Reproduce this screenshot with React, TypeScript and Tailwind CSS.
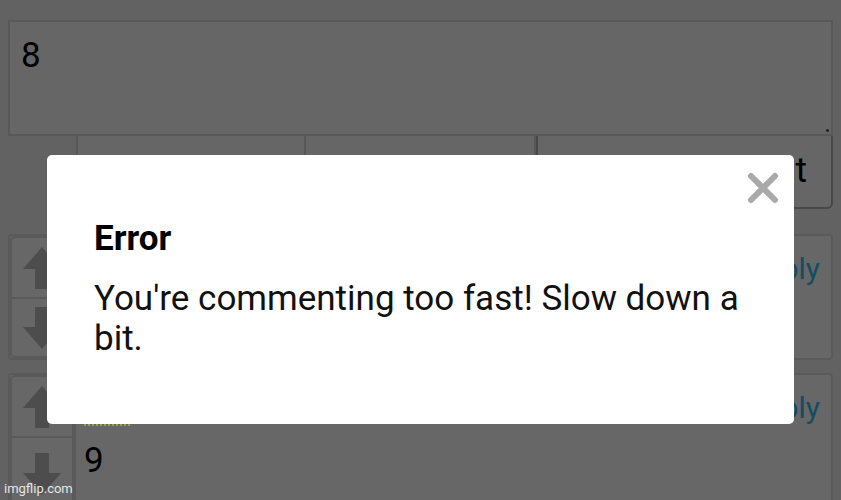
import React from "react";

function Arrow({ dir }: { dir: "up" | "down" }) {
  return (
    <svg width="40" height="42" viewBox="0 0 40 42" className={dir === "down" ? "rotate-180" : ""} aria-hidden>
      <path d="M20 0 L39 22 L27 22 L27 42 L13 42 L13 22 L1 22 Z" fill="#4d4d4d" />
    </svg>
  );
}

function VoteColumn() {
  return (
    <div className="flex w-[64px] shrink-0 flex-col">
      <div className="flex h-[63px] items-center justify-center rounded-t-[5px] border-2 border-[#5a5a5a]">
        <Arrow dir="up" />
      </div>
      <div className="flex flex-1 items-center justify-center rounded-b-[5px] border-2 border-t-0 border-[#5a5a5a]">
        <Arrow dir="down" />
      </div>
    </div>
  );
}

function Comment({ children, height }: { children?: React.ReactNode; height: string }) {
  return (
    <div className={`flex ${height} rounded-[4px] border-2 border-[#5a5a5a] bg-[#676767]`}>
      <VoteColumn />
      <div className="relative flex-1 border-l-2 border-[#5a5a5a]">
        <span className="absolute right-[11px] top-[18px] text-[30px] leading-[30px] text-[#154c62]">Reply</span>
        {children}
      </div>
    </div>
  );
}

export default function App() {
  return (
    <div className="relative h-[500px] w-[841px] overflow-hidden bg-[#626262] font-['Roboto',sans-serif]">
      <div className="px-[8px] pt-[20px]">
        <div className="relative h-[116px] border-2 border-[#585858] bg-[#666666] px-[11px] pt-[14px] text-[35px] leading-[40px] text-black">
          8
          <span className="absolute bottom-[2px] right-[2px] h-[3px] w-[3px] rounded-full bg-[#222]" />
        </div>
        <div className="ml-[68px] flex h-[73px]">
          <div className="w-[230px] border-x-2 border-[#575757] bg-[#666666]" />
          <div className="w-[230px] border-r-2 border-[#575757] bg-[#666666]" />
          <div className="flex flex-1 items-center justify-end rounded-br-[6px] border-2 border-t-0 border-[#484848] bg-[#666666] pr-[24px] text-[35px] text-black">
            Submit
          </div>
        </div>
        <div className="mt-[25px]">
          <Comment height="h-[126px]" />
        </div>
        <div className="mt-[13px]">
          <Comment height="h-[140px]">
            <span className="absolute left-[8px] top-[49px] w-[46px] border-b-2 border-dotted border-[#a0a040]" />
            <span className="absolute left-[8px] top-[66px] text-[35px] leading-[40px] text-black">9</span>
          </Comment>
        </div>
      </div>

      <span className="absolute bottom-[2px] left-[4px] text-[13px] text-[#e4e4e4]">imgflip.com</span>

      <div className="absolute left-[47px] top-[155px] h-[269px] w-[747px] rounded-[5px] bg-white pl-[47px] pr-[40px] pt-[67px]">
        <button className="absolute right-[14px] top-[16px] h-[34px] w-[34px]" aria-label="Close">
          <svg viewBox="0 0 34 34" width="34" height="34">
            <path d="M5 5 L29 29 M29 5 L5 29" stroke="#a9a9a9" strokeWidth="6" strokeLinecap="round" />
          </svg>
        </button>
        <h2 className="text-[35px] font-bold leading-[34px] text-black">Error</h2>
        <p className="mt-[23px] text-[35px] leading-[40px] text-[#111]">
          You're commenting too fast! Slow down a bit.
        </p>
      </div>
    </div>
  );
}
